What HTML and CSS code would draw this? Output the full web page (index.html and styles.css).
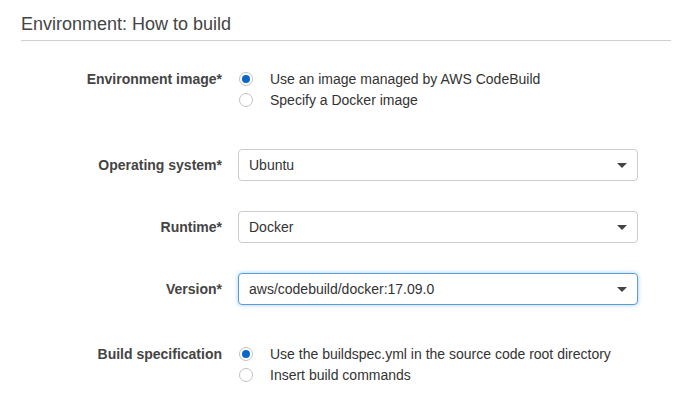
FILE: index.html
```html
<!DOCTYPE html>
<html>
<head>
<meta charset="utf-8">
<link rel="stylesheet" href="styles.css">
</head>
<body>
<div class="section">
  <h2 class="title">Environment: How to build</h2>

  <div class="row row-radio first">
    <div class="label">Environment image*</div>
    <div class="control">
      <div class="radio-line"><span class="radio checked"></span><span class="radio-text">Use an image managed by AWS CodeBuild</span></div>
      <div class="radio-line"><span class="radio"></span><span class="radio-text">Specify a Docker image</span></div>
    </div>
  </div>

  <div class="row row-select os">
    <div class="label">Operating system*</div>
    <div class="control">
      <div class="select"><span class="select-text">Ubuntu</span><span class="caret"></span></div>
    </div>
  </div>

  <div class="row row-select gap30">
    <div class="label">Runtime*</div>
    <div class="control">
      <div class="select"><span class="select-text">Docker</span><span class="caret"></span></div>
    </div>
  </div>

  <div class="row row-select gap30">
    <div class="label">Version*</div>
    <div class="control">
      <div class="select focused"><span class="select-text">aws/codebuild/docker:17.09.0</span><span class="caret"></span></div>
    </div>
  </div>

  <div class="row row-radio build">
    <div class="label">Build specification</div>
    <div class="control">
      <div class="radio-line"><span class="radio checked"></span><span class="radio-text">Use the buildspec.yml in the source code root directory</span></div>
      <div class="radio-line"><span class="radio"></span><span class="radio-text">Insert build commands</span></div>
    </div>
  </div>
</div>
</body>
</html>
```

FILE: styles.css
```css
html, body {
  margin: 0;
  padding: 0;
  background: #fff;
}
body {
  font-family: "Liberation Sans", Arial, sans-serif;
  color: #444;
}
.section {
  padding: 0 7px 0 21px;
}
.title {
  margin: 0;
  padding: 13px 0 5px 0;
  font-size: 18px;
  line-height: 22px;
  font-weight: normal;
  color: #444;
  border-bottom: 1px solid #cfcfcf;
}
.row {
  display: grid;
  grid-template-columns: 201px 400px;
  column-gap: 16px;
}
.row.first { margin-top: 27px; }
.row.os { margin-top: 39px; }
.row.gap30 { margin-top: 30px; }
.row.build { margin-top: 38px; }
.label {
  text-align: right;
  font-weight: bold;
  font-size: 14px;
  color: #444;
}
.row-radio .label { line-height: 22px; }
.row-select .label { line-height: 32px; }
.radio-line {
  display: flex;
  align-items: center;
  height: 21px;
}
.radio {
  box-sizing: border-box;
  width: 14px;
  height: 14px;
  border-radius: 50%;
  border: 1px solid #c2c2c2;
  background: #fff;
  display: flex;
  align-items: center;
  justify-content: center;
  flex: none;
  margin-left: 1px;
}
.radio.checked::after {
  content: "";
  width: 8px;
  height: 8px;
  border-radius: 50%;
  background: #0b66c7;
}
.radio-text {
  margin-left: 17px;
  font-size: 14px;
  color: #333;
  white-space: nowrap;
}
.select {
  box-sizing: border-box;
  height: 32px;
  border: 1px solid #cccccc;
  border-radius: 4px;
  display: flex;
  align-items: center;
  padding: 0 10px 0 10px;
  background: #fff;
}
.select.focused {
  border-color: #5b9dd9;
  box-shadow: 0 0 4px rgba(82, 160, 230, 0.55);
}
.select-text {
  flex: 1;
  font-size: 14px;
  color: #333;
}
.caret {
  width: 0;
  height: 0;
  border-left: 5px solid transparent;
  border-right: 5px solid transparent;
  border-top: 5px solid #444;
}
```
